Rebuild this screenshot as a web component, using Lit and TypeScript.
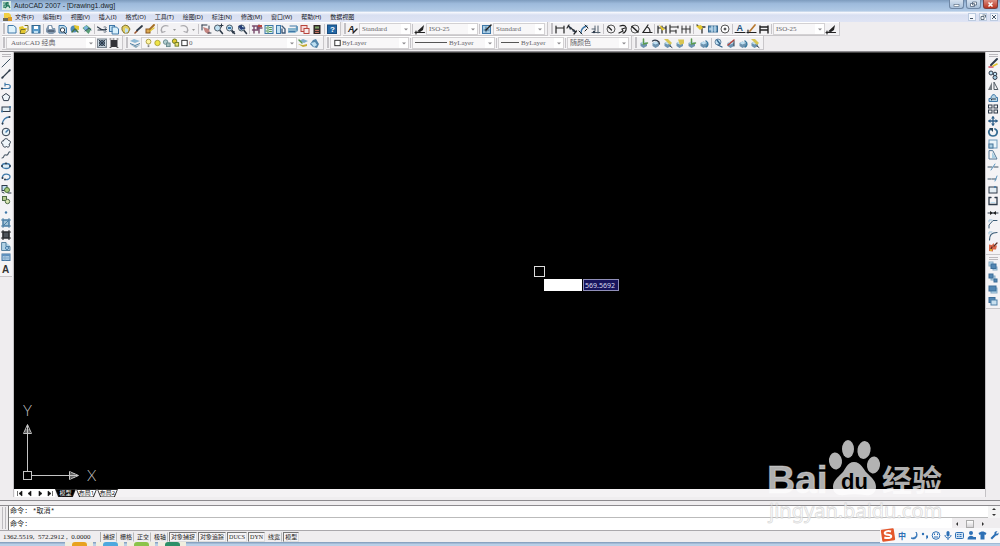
import { LitElement, html, svg, css, nothing } from "lit";
import { customElement, property } from "lit/decorators.js";

const K = "#2f3b4a";
const B = "#3f78a8";
const L = "#bfe0f2";
const G = "#5b9a4f";
const Y = "#e3c62f";
const R = "#b8443c";

const line = (d: string, c = K, w = 1) =>
  svg`<path d=${d} fill="none" stroke=${c} stroke-width=${w} stroke-linecap="round"/>`;
const fill = (d: string, c = K) => svg`<path d=${d} fill=${c}/>`;
const box = (x: number, y: number, w: number, h: number, f: string, s = K) =>
  svg`<rect x=${x} y=${y} width=${w} height=${h} fill=${f} stroke=${s}/>`;
const dot = (x: number, y: number, r: number, f: string, s = "none") =>
  svg`<circle cx=${x} cy=${y} r=${r} fill=${f} stroke=${s}/>`;
const sheet = svg`<path d="M2 2.5h5l2.500 2v5.500h-7.500z" fill=${L} stroke=${B}/>`;
const cube = svg`${fill("M2.500 6l3-1.500 3.500 1.500v3l-3.500 2-3-2z", "#6d93b0")}${fill("M2.500 6l3-1.500 3.500 1.500-3.500 1.500z", L)}`;
const lens = svg`${line("M8 7.500l2.500 3", K, 1.6)}${dot(5.5, 5, 3, L, "#4d5b68")}`;

const icons: Record<string, unknown> = {
  new: svg`<path d="M2 2.500h5.500l2.500 2v5.500h-8z" fill="#dff2fb" stroke=${B}/>`,
  open: svg`${fill("M1 4l4-1 1 2h3l-2 5h-5z", Y)}${line("M7 2.500h3v5l-3 3h-5l1-4h4", "#77712e")}`,
  save: svg`${box(2, 2.5, 8, 7.500, "#5b9cca", "#35678e")}${fill("M4 3h4v3h-4z", "#fff")}${fill("M4 8h4v2h-4z", L)}`,
  print: svg`${fill("M3 2h4l1 3h2l1 4-3 2h-4l-3-2v-3z", "#8298af")}${fill("M4 3h2l1 3h-3z", "#fff")}${line("M3 8h6")}`,
  preview: svg`${sheet}${dot(5.5, 7, 2.2, "#fff", K)}${line("M7 9l2 2")}`,
  publish: svg`${dot(5, 6, 3.5, "#4d8abb")}${fill("M5 2l5 1v4l-4-1z", Y)}${line("M3 9l3-3 3 3", "#47753b", 1.3)}`,
  dwf: svg`${fill("M1.500 5l4-3 5 4-3 5z", "#5a9c76")}${dot(5, 5, 2, "#7ab6e0")}${line("M4 8l4-3 2 2", "#35566f")}`,
  cut: svg`${line("M1.500 4l4 2.500h5M2 7h6", K, 1.2)}${line("M8 4c3-1 3 2 0 2.500M8 7c3 0 3 3 0 2", "#536272")}`,
  copy: svg`${box(1.5, 2.500, 5, 6, L, B)}${fill("M4.500 4h4l2 2v5h-6z", "#d8f0fb")}${line("M4.500 4h4l2 2v5h-6z", B)}`,
  paste: svg`<path d="M2 4l3-2 3 1 2 3-2 4h-4l-2-3z" fill="#e3cf62" stroke="#83752d"/>${fill("M5 5l3 1v3l-3 1z", L)}`,
  brush: svg`${line("M3 10l2-2", "#9a5128", 1.6)}${line("M5 7.500l5-4.500", K, 1.8)}`,
  match: svg`${box(2, 6, 4, 4, "#dca852", "#8b5823")}${line("M6 6l4-4", "#a56f26", 2)}${line("M6 8l4-3", Y, 1.3)}`,
  undo: line("M3 9c-2-5 2-7 6-6M2 7l1 2.500 3-1", "#aaa9ad", 1.2),
  redo: line("M9 9c2-5-2-7-6-6M10 7l-1 2.500-3-1", "#aaa9ad", 1.2),
  pan: svg`${line("M2 2v5M2 2h5", K)}${fill("M3 4l3 1 3 1 1 4-2 1-3-2z", "#c38581")}${line("M9 3v3M8 10h3")}`,
  zoomRt: svg`${lens}${line("M8 2.500h3M9.500 1v3")}`,
  zoomWin: svg`${lens}${fill("M7 8h4l-2 3z")}${fill("M4 4h3v2h-3z", B)}`,
  zoomPrev: svg`${lens}${fill("M2 3l4-1v2l4 1-5 2z", "#263d76")}`,
  props: svg`${line("M3 3v7M1.500 3h5v4h-5M8 2v8M6 5h5", "#774a6b", 1.4)}${fill("M7 2h4v2h-4z", R)}`,
  design: svg`${box(2, 2.5, 8, 8, "#dcebf3", B)}${line("M5 3v7M6.500 4.500h2M6.500 6.500h2M6.500 8.500h2M3 5h1M3 8h1", G)}`,
  palettes: svg`${box(1.5, 2.500, 4, 8, L, B)}${line("M7 3l3 3v4h-3M7 6v4", "#425c79", 1.4)}`,
  sheets: svg`${fill("M1 5h7l3-2v5l-3 2h-7z", "#8ab6ce")}${line("M3 3h7v4M2 8.500h6", B)}`,
  markup: svg`${box(2, 2.5, 6, 6, "#f5d9d9", R)}${box(5, 5.5, 5, 5, "#f7eaea", R)}`,
  calc: svg`${box(3, 2.5, 6, 8, "#3c3532", "#2e2525")}${fill("M4 3.500h4v2h-4z", "#7da365")}${line("M4.500 7.500h3M4.500 9.500h3", "#c87566")}`,
  help: svg`${box(1.5, 2, 9, 8.500, "#2167a5", "#174c80")}<text x="4" y="9" font-size="8" font-weight="700" font-family="Liberation Sans" fill="#fff">?</text>`,
  textStyle: svg`<text x="1" y="8.500" font-size="9" font-style="italic" font-weight="700" font-family="Liberation Sans" fill="#222">A</text>${line("M6 10l4-4", "#222", 1.4)}`,
  dimStyle: svg`${line("M1 9.500h9.500M2 8v3", "#222", 1.2)}${fill("M3 8.500l7-6.500-1 5-3 2z", "#222")}`,
  tableStyle: svg`${box(1.5, 2.500, 8, 8, "#a8cce4", B)}${line("M3 7h5M5 4v5", "#36698f")}${line("M5 7l5-5", "#222", 1.5)}`,
  dLinear: line("M2 3v7M10 3v7M2 5h8M2 4v2M10 4v2", "#222", 1.2),
  dAligned: svg`${line("M2 3l8 6M1 5l2-3M8 11l2.500-3", "#222", 1.2)}${fill("M2 2l4 3-2 2zM10 10l-4-2 2-2z")}`,
  dArc: svg`${line("M3 10c0-4 2-6 6-7", B, 1.4)}${line("M1 8l3 3M7 2l3 3M7 8l2-2", "#222")}`,
  dOrd: svg`${line("M2 9.500h8M8 3v7M2 6h3M5 3v5", "#52606e")}${dot(4, 9, 1.2, K)}`,
  dRadius: svg`${dot(6, 6, 4, "none", "#555")}${line("M3.500 4l3 3", "#222", 1.3)}`,
  dJog: svg`${line("M3 3c5-2 7 1 6 4s-3 3-3 3M2 10l4-2-1-2 3-1", "#222", 1.2)}`,
  dDia: svg`${dot(6, 6, 4, "none", "#555")}${line("M3 3.500l6 5.500", "#222", 1.6)}`,
  dAng: line("M7 2l-5 7.500h9M6 4c3 1 3 3 3 5", "#222", 1.2),
  dQuick: svg`${line("M2 3v7M6 3v7M10 3v7M2 5h8", "#222", 1.2)}${fill("M3 1.500l6 5-3 1z", Y)}`,
  dBase: line("M2 2v8M2 4h8M2 8h6M10 3v2M8 7v3", "#333", 1.2),
  dCont: line("M2 3v7M6 3v7M10 3v7M2 6h8", "#333"),
  leader: svg`${line("M5 4h5M7 5v5M2 2l3 3", "#333", 1.3)}${fill("M1 3l5-1 2 3-3 2z", Y)}`,
  tol: svg`${box(1.5, 3, 9, 6, "#6f9fc1", "#35678e")}${line("M5 3v6M8 3v6M2.500 6h1.500", "#e3f4ff")}`,
  center: svg`${dot(6, 6, 4, "#fff", "#555")}${line("M6 5v2M5 6h2", "#222")}`,
  dEdit: svg`<text x="2.500" y="8" font-size="9" font-weight="700" font-family="Liberation Sans" fill="#24557e">A</text>${line("M1 9.500h10", "#222")}`,
  dTextEdit: svg`${line("M1 9.500h9M2 7v3", "#222", 1.2)}${line("M4 8l5-6", "#b7782f", 1.7)}`,
  dUpdate: svg`${line("M2 3v7M10 3v7M2 4h8M2 7h8", "#222", 1.4)}`,
  gear: svg`${box(1.5, 2, 9, 8.500, "#c8d5df", "#7d8791")}${dot(6, 6, 2.5, "#5d7890", K)}${line("M3 3l6 6M9 3l-6 6")}`,
  wsSave: svg`${box(3, 3.500, 6, 6, "#333338", "#35353a")}${line("M2 2h1M5 2h1M9 2h1M2 10.500h1M9 10.500h1", "#555")}`,
  layers: svg`${fill("M1 4l4-2 6 2-5 2z", "#8db8d4")}${fill("M1 6l5 2 5-2v1l-5 2-5-2z", "#477a9f")}${fill("M2 8l5 1 4-1-4 3z", "#8aa8ba")}`,
  layPrev: svg`${fill("M2 4l4-2 5 2-4 2z", "#7cabc9")}${fill("M1 7l5 1 4-1v2l-4 1z", "#c4ad36")}${line("M2 3l3 3", G, 1.4)}`,
  layState: svg`${fill("M4 3l3-1 3 5-2 4-4-1-3-3z", "#5284a9")}${fill("M2 6l4-1 2 3-3 2z", L)}`,
  bulb: svg`${dot(5, 4.5, 2.700, "#fff4a0", "#a8993a")}${line("M4.500 8.500h1M4.500 10h1", "#666")}`,
  sun: dot(5, 6, 3, "#f0e445", "#a9a23b"),
  vpf: svg`${dot(4, 5, 2.500, "#b2cdd0", "#66888c")}${box(5, 6, 4, 4, "#a7c0bf", "#66888c")}`,
  lock: svg`${dot(4, 4, 2.500, Y, "#667a20")}${box(4.5, 5.500, 4, 4, "#e9e06c", "#6d7826")}`,
  swatch: box(2, 3, 6, 6, "#fff", "#222"),
  c1: svg`${cube}${line("M5.500 2v5l4-1", G, 1.5)}`,
  c2: svg`${cube}${line("M2.500 4c3-2 7 0 7 3", K, 1.3)}`,
  c3: svg`${cube}${fill("M2 2h4l4 4-2 2z", "#d8c552")}${line("M8 9l2 1.500")}`,
  c4: svg`${cube}${fill("M4 2.500h6v4l-4 1.500z", "#d8c552")}`,
  c5: svg`${cube}${line("M8 4c3 2 2 5 0 6", "#3979a0", 1.5)}`,
  c6: svg`${dot(5, 5, 3, L, "#6c8ba8")}${line("M5 8l4 2M4 3l3 4", "#34658d", 1.3)}`,
  c7: svg`${cube}${line("M3 8l6-5", R, 1.5)}${line("M9 4v5", K)}`,
  line: line("M2 10l8-8", "#3e5364"),
  xline: svg`${line("M2 10l8-8", K, 1.2)}${dot(2.5, 9.5, 1, K)}${dot(9.5, 2.5, 1, K)}`,
  pline: svg`${line("M2 8.500h6c3 0 3-4 0-4h-3M5 3v3", B, 1.2)}${dot(2, 8.5, 1, K)}`,
  polygon: svg`<path d="M6 2.500l3.800 2.800-1.500 4.300h-4.600l-1.500-4.300z" fill="#eef5fa" stroke=${K}/>`,
  rect: svg`${box(2, 4, 8, 4.500, "#e3eff6", K)}${dot(10, 4, 1, B)}${dot(2, 8.500, 1, B)}`,
  arc: svg`${line("M2.500 10c0-4 3-7 7-7", B, 1.3)}${dot(2.500, 9.500, 1, K)}${dot(9.500, 3, 1, K)}`,
  circle: svg`${dot(6, 6, 3.800, "#e8f3f9", K)}${line("M6 6l2-2", B, 1.4)}`,
  cloud: svg`<path d="M3 7.500c-2-.5-2-4 .5-3.500 .5-3 4-3 5-.5 2.500 0 2.500 3 .5 3.500 1.500 2.500-1 4-2.500 2.500-2 1.500-4 0-3.500-2z" fill="#eef5fa" stroke=${K}/>`,
  spline: line("M2 9c3 0 1-4 4-3 3 1 2-4 4-3", "#4d5c6a", 1.1),
  ellipse: svg`<ellipse cx="6" cy="6" rx="4" ry="2.500" fill="#dcecf6" stroke=${B} stroke-width="1.300"/>${dot(6, 3.500, 1, K)}${dot(2, 6, 1, K)}${dot(10, 6, 1, K)}`,
  earc: svg`${line("M2.500 7c-1-5 8-5 7.500-1 0 2-3 3-4 2.500", B, 1.3)}${dot(5, 8.500, 1, K)}${dot(2.500, 7, 1, K)}`,
  insert: svg`${box(2, 2.500, 5, 5, L, K)}${dot(7, 7, 2.500, "#a9ca79", "#4b713c")}${line("M8 10h3M2 9l2 1", K)}`,
  block: svg`${box(2.500, 2.500, 4, 4, "#b7cb8e", "#4d6a45")}${dot(7.500, 7.500, 2.200, "#dce8b3", "#4d6a45")}`,
  point: dot(6, 6.500, 1.200, B),
  hatch: svg`${box(3, 3, 6, 6, "#a2c2d6", B)}${line("M1.500 3h9M1.500 9h9M3 1.500v9M9 1.500v9M4 8l4-4", "#4d7fa3")}`,
  grad: svg`${box(3, 3, 6, 6, "#4e545b", "#2a2d31")}${line("M1.500 3h9M1.500 9h9M3 1.500v9M9 1.500v9", "#2a2d31", 1.2)}`,
  region: svg`${fill("M2 2.500h4l4 3v5h-8z", "#b2d2e5")}${line("M2 2.500h4v4h4v4h-8z", "#57819f")}${dot(7, 8, 1.500, L, B)}`,
  table: svg`${box(2, 3, 8, 6.500, "#a5c6e2", "#4574a0")}${fill("M2 3h8v2h-8z", "#5f90bd")}${line("M2 7h8M5 5v4", "#84abcb")}`,
  mtext: svg`<text x="2" y="10" font-size="10" font-weight="700" font-family="Liberation Sans" fill="#333">A</text>`,
  erase: svg`${line("M2 10h4", "#d24f58", 1.5)}${line("M4 8l6-6", K, 2)}${line("M6 9l4-2", Y, 1.6)}`,
  copy2: svg`${dot(4, 4, 2, L, K)}${dot(8, 5, 1.800, L, K)}${dot(8, 8.500, 2, "#a9cee3", K)}`,
  mirror: svg`${fill("M5 2v8h-4z", "#777d83")}${line("M7 2.500v7h3.500z", "#4f5962")}`,
  offset: svg`<path d="M2 9.500v-3h2c0-5 5-5 5-1h1.500v4z" fill="#b6d4e5" stroke=${B}/>${line("M4.500 8v-1h4", K)}`,
  array: svg`${box(1.500, 2, 3.500, 3, "#eee")}${box(7, 2, 3.500, 3, "#eee")}${box(1.500, 7, 3.500, 3, "#eee")}${box(7, 7, 3.500, 3, "#eee")}`,
  move: svg`${line("M2 6h8M6 2v8", "#2d5f89", 1.3)}${fill("M6 1l2 2.500h-4zM6 11l2-2.500h-4zM1 6l2.500-2v4zM11 6l-2.500-2v4z", "#2d5f89")}`,
  rotate: svg`${line("M4 3c-4 2-2 7 2 7s6-5 2-7", "#356c93", 1.7)}${fill("M2 2h4v4z", "#28445a")}`,
  scale: svg`${box(2, 2, 8, 8, "#eaf4fa", "#6d9abb")}${box(2, 6, 4, 4, "#a8cde2", "#447398")}`,
  stretch: svg`${line("M2 2v8h8l-4-8z", "#537797")}${fill("M5 3l4 6h-4z", "#a9cfe4")}`,
  trim: svg`${line("M1 6h4M7 6h4", "#3b5266")}${line("M4 9l4-6", "#5993bd")}`,
  extend: svg`${line("M1 7h3M5 7h4", "#3b5266")}${line("M8 9l2-5", "#5993bd")}`,
  break1: svg`${box(2, 3, 8, 6, "#e4edf3")}${dot(8, 3, 1, B)}`,
  break2: svg`${line("M4 2.500h-2v7h8v-7h-2", K, 1.3)}${line("M4 7.500h4", L)}`,
  join: svg`${line("M1 6h10", K)}${fill("M6 6l-3-2v4zM6 6l3-2v4z", "#222")}`,
  chamfer: svg`${line("M2 10v-3l4-4.500h4", "#3a5c76")}${line("M2 4v-2h3", "#9ac1d8")}`,
  fillet: svg`${line("M2.500 10c0-5 2-7.500 7.500-7.500", "#3a5c76", 1.2)}${line("M2 4v-2h3", "#9ac1d8")}`,
  explode: svg`${fill("M2 3.500l3 .5 1.500-2 1 2.500 2.500 0-1 4-3 0v2l-4-.5z", "#d9684a")}${line("M7 5l3-3M4 8l1-2", "#5a2d22", 1.3)}${dot(4, 9, 1, Y)}`,
  front: svg`${box(2, 2, 4, 4, L, "#86aac4")}${box(6, 7, 4, 3, L, "#86aac4")}${box(4, 4, 5, 4.500, "#5286b3", "#3c6e99")}`,
  back: svg`${box(4, 4, 4, 4, "#b7d1e2", "#86aac4")}${box(2, 2, 4, 4, "#5286b3", "#3c6e99")}${box(7, 7, 3, 3, "#5286b3", "#3c6e99")}`,
  above: svg`${box(4, 5, 6, 5, L, "#86aac4")}${box(2, 3, 7, 5, "#5286b3", "#3c6e99")}`,
  under: svg`${box(2, 2.500, 6, 5, "#5286b3", "#3c6e99")}${box(4, 5, 6, 5, "#c8e0ef", "#4e80a8")}`,
};

const base = css`
  * { box-sizing: border-box; }
  button { border: 0; padding: 0; margin: 0; background: none; font: inherit; color: inherit; flex: none; }
  svg { display: block; }
`;

@customElement("tool-icon")
class ToolIcon extends LitElement {
  @property() name = "";
  static styles = [base, css`
    :host { display: block; flex: none; width: 12px; height: 12px; }
    .tool { display: block; width: 12px; height: 12px; }
  `];
  render() {
    return html`<button class="tool" aria-label=${this.name}>
      <svg width="12" height="12" viewBox="0 0 12 12">${icons[this.name]}</svg>
    </button>`;
  }
}

@customElement("combo-box")
class ComboBox extends LitElement {
  @property() label = "";
  @property() value = "";
  @property({ type: Array }) lead: string[] = [];
  @property({ type: Number }) rule = 0;
  static styles = [base, css`
    :host { display: flex; flex: none; height: 12px; border: 1px solid #d3d1d3; background: #f8f7f8; align-items: center; padding-left: 2px; }
    .lead { flex: none; width: 9px; height: 12px; margin-top: 1px; }
    .rule { flex: none; height: 1px; background: #555; margin-right: 2px; }
    .pick { appearance: none; flex: 1; min-width: 0; height: 10px; border: 0; padding: 0; background: none; color: #66646a;
      font: 7px/10px "Liberation Serif", "Noto Sans CJK SC", serif; }
    .arrow { flex: none; width: 9px; height: 10px; background: #fff; }
  `];
  render() {
    return html`
      ${this.lead.map((n) => html`<svg class="lead" viewBox="0 0 10 12">${icons[n]}</svg>`)}
      ${this.rule ? html`<span class="rule" style="width:${this.rule}px"></span>` : nothing}
      <select class="pick" aria-label=${this.label}><option>${this.value}</option></select>
      <svg class="arrow" viewBox="0 0 9 10"><path d="M3 4.500h4l-2 2z" fill="#8b898c"/></svg>`;
  }
}

type Item = string | { label: string; value: string; w: string; lead?: string[]; rule?: number };
const combo = (label: string, value: string, w: string, lead: string[] = [], rule = 0): Item => ({ label, value, w, lead, rule });

const rowOne: Item[][] = [
  ["new", "open", "save", "|", "print", "preview", "publish", "dwf", "|", "cut", "copy", "paste", "brush", "match", "|",
    "undo", "v", "redo", "v", "|", "pan", "zoomRt", "zoomWin", "zoomPrev", "|", "props", "design", "palettes", "sheets", "markup", "calc", "|", "help"],
  ["textStyle", combo("文字样式", "Standard", "style"), "|", "dimStyle", combo("标注样式", "ISO-25", "style"), "|",
    "tableStyle", combo("表格样式", "Standard", "style")],
  ["dLinear", "dAligned", "dArc", "dOrd", "|", "dRadius", "dJog", "dDia", "dAng", "|", "dQuick", "dBase", "dCont", "|",
    "leader", "tol", "center", "|", "dEdit", "dTextEdit", "dUpdate", "|", combo("标注样式控制", "ISO-25", "style"), "dimStyle"],
];
const rowTwo: Item[][] = [
  [combo("工作空间", "AutoCAD 经典", "space"), "gear", "wsSave"],
  ["layers", combo("图层", "0", "layer", ["bulb", "sun", "vpf", "lock", "swatch"]), "layPrev", "layState"],
  [combo("颜色", "ByLayer", "color", ["swatch"]), "|", combo("线型", "ByLayer", "ltype", [], 32), "|",
    combo("线宽", "ByLayer", "lweight", [], 18), "|", combo("打印样式", "随颜色", "plot")],
  ["c1", "c2", "c3", "c4", "c1", "c5", "|", "c6", "c7", "c5", "c3"],
];

const menus = ["文件(F)", "编辑(E)", "视图(V)", "插入(I)", "格式(O)", "工具(T)", "绘图(D)", "标注(N)", "修改(M)", "窗口(W)", "帮助(H)", "数据视图"];
const draw = ["line", "xline", "pline", "polygon", "rect", "arc", "circle", "cloud", "spline", "ellipse", "earc", "insert", "block", "point", "hatch", "grad", "region", "table", "mtext"];
const modify = ["erase", "copy2", "mirror", "offset", "array", "move", "rotate", "scale", "stretch", "trim", "extend", "break1", "break2", "join", "chamfer", "fillet", "explode"];
const order = ["front", "back", "above", "under"];
const modes: [string, boolean][] = [["捕捉", false], ["栅格", false], ["正交", false], ["极轴", false], ["对象捕捉", true], ["对象追踪", true], ["DUCS", true], ["DYN", true], ["线宽", false], ["模型", true]];

@customElement("app-root")
class AppRoot extends LitElement {
  static styles = [base, css`
    :host { display: flex; flex-direction: column; position: relative; height: 100vh; overflow: hidden; background: #efedef;
      color: #222; font: 7px/10px "Noto Sans", "Noto Sans CJK SC", sans-serif; }
    .title { display: flex; flex: none; height: 12px; align-items: flex-start; padding: 0 2px; gap: 3px;
      background: linear-gradient(#7d9bbd, #9dbadb 30%, #b0c9e5 90%, #dce6f3); }
    .title h1 { flex: 1; margin: 0; font: 7px/11px "Liberation Sans", sans-serif; color: #151c26; }
    .win { width: 15px; height: 9px; border: 1px solid #6f87a5; border-top: 0; border-radius: 0 0 3px 3px; background: linear-gradient(#d5e1ef, #a8bfd9); }
    .wins { display: flex; gap: 2px; }
    .close { background: linear-gradient(#dc8c80, #b93522); border-color: #7d3b3c; }
    .win svg, .mdi svg { margin: 0 auto; }
    .menu { display: flex; flex: none; height: 10px; align-items: center; padding: 0 2px 0 3px; background: linear-gradient(#fafbff, #d8dff1 30%, #dfe4f4); }
    .menu nav { display: flex; flex: 1; gap: 9px; padding-left: 3px; }
    .menu a { color: #15151c; text-decoration: none; font: 6px/10px "Noto Sans", "Noto Sans CJK SC", sans-serif; white-space: nowrap; }
    .mdis { display: flex; gap: 3px; }
    .mdi { width: 8px; height: 8px; background: #f4f7fc; border: 1px solid #bccbe0; }
    .bars { flex: none; display: flex; flex-direction: column; border-bottom: 1px solid #8b898d; padding: 0 0 1px 2px; }
    .row { display: flex; gap: 2px; height: 14px; }
    .bar { display: flex; flex: none; align-items: center; padding-right: 2px; border: solid #c9c7ca; border-width: 0 1px 1px 0; background: #f3f2f4; box-shadow: inset 0 1px #fff; }
    .grip { flex: none; width: 2px; height: 11px; margin: 0 1px; border: solid #c3c1c5; border-width: 0 1px; }
    .sep { flex: none; width: 1px; height: 10px; margin: 0 1px; background: #c6c4c8; }
    .drop { width: 7px; height: 10px; }
    .style { width: 52px; }
    .space { width: 90px; padding-left: 4px; }
    .layer { width: 156px; }
    .color { width: 79px; }
    .ltype { width: 83px; }
    .lweight { width: 66px; }
    .plot { width: 62px; }
    .work { display: flex; flex: 1; min-height: 0; }
    .side { flex: none; width: 14px; border: solid #c4c2c5; border-width: 0 1px 0 0; padding-right: 1px; }
    .right { border-width: 0 0 0 1px; width: 15px; padding: 0; }
    .rack { display: flex; flex-direction: column; align-items: center; padding-bottom: 2px; border-bottom: 1px solid #c9c7ca; background: #f4f3f5; }
    .hgrip { flex: none; width: 9px; height: 3px; margin: 2px 0 0; border: solid #bab8bc; border-width: 1px 0; }
    .tools { display: flex; flex-direction: column; justify-content: space-between; }
    .tools tool-icon { height: 11px; }
    .draw { height: 217px; }
    .modify { height: 195px; }
    .order { height: 46px; }
    .main { flex: 1; min-width: 0; display: flex; flex-direction: column; }
    .canvas { flex: 1; position: relative; background: #000; border-top: 1px solid #444; }
    .ucs { position: absolute; left: 5px; bottom: 0; }
    .cursor { position: absolute; left: 520px; top: 213px; width: 11px; height: 11px; border: 1px solid #ddd; }
    .coord { position: absolute; top: 226px; height: 12px; padding: 0 1px; border: 1px solid #fff; background: #fff; font: 7px/10px "Noto Sans", sans-serif; }
    .cx { left: 530px; width: 38px; color: #fff; }
    .cy { left: 569px; width: 36px; background: #17145c; border-color: #8f8eb8; color: #d8d8ee; }
    .tabs { display: flex; flex: none; height: 8px; background: #f4f2f4; font: 6px/8px "Noto Sans", "Noto Sans CJK SC", sans-serif; padding-left: 1px; }
    .tabs .go { width: 10px; height: 8px; background: #fff; }
    .tab { width: 21px; height: 8px; line-height: 8px; background: #222; clip-path: polygon(0 0, 100% 0, 85% 100%, 15% 100%); padding: 0; }
    .tab span { display: block; height: 7px; line-height: 7px; margin: 0 1px; background: #fff; color: #111; clip-path: polygon(0 0, 100% 0, 84% 100%, 16% 100%); }
    .tab.on span { background: #000; color: #fff; }
    .split { flex: none; height: 8px; padding-top: 3px; }
    .split::before { content: ""; display: block; height: 1px; background: #8d8b8f; }
    .cmd { flex: none; display: grid; grid-template-columns: 8px 1fr; height: 25px; border-top: 1px solid #8d8b8f; }
    .cmdgrip { margin: 1px 2px; border: solid #bdbbbf; border-width: 0 1px; }
    .console { display: grid; grid-template: 12px 12px / 1fr 12px; border-left: 1px solid #777; background: #fff; font: 7px/11px "Liberation Mono", "Noto Sans CJK SC", monospace; }
    .hist { border-bottom: 1px solid #bbb; padding-left: 1px; }
    .ask { display: flex; padding-left: 1px; line-height: 12px; }
    .entry { flex: 1; min-width: 0; border: 0; padding: 0; height: 12px; font: inherit; background: none; }
    .hscroll { flex: none; display: flex; width: 36px; background: #efedef; align-items: center; justify-content: space-around; }
    .thumb { width: 8px; height: 8px; border: 1px solid #aaa; background: linear-gradient(#fff, #d5d3d6); }
    .vscroll { display: flex; background: #f4f4f4; justify-content: center; align-items: center; }
    .corner { background: #efedef; }
    .status { flex: none; display: flex; align-items: center; height: 12px; border-top: 1px solid #aaa8ac; }
    .pos { width: 101px; height: 10px; padding-left: 3px; font: 7px/10px "Liberation Serif", serif; border-right: 1px solid #aaa; white-space: pre; }
    .mode { height: 10px; padding: 0 1px; border: 1px solid transparent; border-right-color: #bbb; font: 6px/9px "Liberation Serif", "Noto Sans CJK SC", serif; margin-right: 1px; }
    .on.mode { border-color: #777 #ddd #ddd #777; background: #f5f4f6; }
    .task { flex: none; height: 4px; display: flex; background: linear-gradient(#7c97b7, #b9cfe7 60%); padding-left: 65px; gap: 3px; }
    .slot { width: 28px; background: #f0eedf; display: flex; justify-content: center; }
    .slot i { width: 15px; height: 4px; border-radius: 3px 3px 0 0; background: var(--tint); }
    .ime { position: absolute; right: 0; bottom: 3px; width: 120px; height: 15px; background: #f8f8fa; }
    .mark { position: absolute; left: 766px; top: 436px; pointer-events: none; }
  `];

  private bar(items: Item[]) {
    return html`<div class="bar"><span class="grip"></span>${items.map((i) =>
      typeof i !== "string"
        ? html`<combo-box class=${i.w} .label=${i.label} .value=${i.value} .lead=${i.lead ?? []} .rule=${i.rule ?? 0}></combo-box>`
        : i === "|" ? html`<span class="sep"></span>`
        : i === "v" ? html`<button class="drop" aria-label="more"><svg width="7" height="10"><path d="M2 5h3l-1.500 2z" fill="#999"/></svg></button>`
        : html`<tool-icon name=${i}></tool-icon>`)}</div>`;
  }
  private rack(groups: [string, string[]][]) {
    return groups.map(([c, names]) => html`<div class="rack"><span class="hgrip"></span>
      <div class="tools ${c}">${names.map((n) => html`<tool-icon name=${n}></tool-icon>`)}</div></div>`);
  }

  render() {
    return html`
      <header class="title">
        <svg width="9" height="10" viewBox="0 0 9 10"><rect width="9" height="9" y="1" fill="#d8ebe3"/><path d="M1 3h3v2h-2v3M6 2v4h2M3 8l3-3 2 3M5 2l-1 5" fill="none" stroke="#24795f" stroke-width="1.200"/></svg>
        <h1>AutoCAD 2007 - [Drawing1.dwg]</h1>
        <div class="wins">
          <button class="win" aria-label="最小化"><svg width="9" height="8"><rect x="2" y="4.500" width="5" height="2" fill="#fff" stroke="#53657b" stroke-width=".6"/></svg></button>
          <button class="win" aria-label="还原"><svg width="9" height="8"><path d="M3.500 2h4v3h-4zM1.500 3.500h4v3h-4z" fill="#fff" stroke="#53657b" stroke-width=".8"/></svg></button>
          <button class="win close" aria-label="关闭"><svg width="9" height="8"><path d="M2.500 2.500l4 4M6.500 2.500l-4 4" stroke="#fff" stroke-width="1.500"/></svg></button>
        </div>
      </header>
      <div class="menu">
        <svg width="9" height="9" viewBox="0 0 9 9"><path d="M1 0h5l2 2v6h-7z" fill="#f1cf45"/><path d="M0 5h5v3h-5z" fill="#6e6a57"/><path d="M5 4h4v4h-4z" fill="#dc9b25"/></svg>
        <nav>${menus.map((m) => html`<a href="#">${m}</a>`)}</nav>
        <div class="mdis">
          <button class="mdi" aria-label="最小化窗口"><svg width="6" height="6"><path d="M1 4.500h3" stroke="#456"/></svg></button>
          <button class="mdi" aria-label="还原窗口"><svg width="6" height="6"><path d="M2.500 1h3v2.500M1 2.500h3v3h-3z" fill="none" stroke="#456" stroke-width=".8"/></svg></button>
          <button class="mdi" aria-label="关闭窗口"><svg width="6" height="6"><path d="M1 1l4 4M5 1l-4 4" stroke="#456"/></svg></button>
        </div>
      </div>
      <div class="bars">
        <div class="row">${rowOne.map((b) => this.bar(b))}</div>
        <div class="row">${rowTwo.map((b) => this.bar(b))}</div>
      </div>
      <div class="work">
        <aside class="side">${this.rack([["draw", draw]])}</aside>
        <main class="main">
          <div class="canvas">
            <svg class="ucs" width="80" height="90" viewBox="0 -6 80 90" fill="none" stroke="#c4c4c4">
              <rect x="4.500" y="66.500" width="8" height="8"/>
              <path d="M8.500 66V20M4.500 28.500l4-9 4 9zM7 28v-4M10 28v-4M13 70.500h46M50.500 66.500l9 4-9 4zM51 69h5M51 72h5"/>
              <g fill="#c4c4c4" stroke="none" font-family="Lato" font-weight="300" font-size="15">
                <text x="4" y="11">Y</text><text x="68" y="76">X</text>
              </g>
            </svg>
            <span class="cursor"></span>
            <input class="coord cx" aria-label="X" value="">
            <input class="coord cy" aria-label="Y" value="569.5692">
          </div>
          <div class="tabs">
            ${["M2.500 2v5M7 2v5l-3-2.500z", "M6 2v5l-3-2.500z", "M4 2v5l3-2.500z", "M7.500 2v5M3 2v5l3-2.500z"].map((d) =>
              html`<button class="go" aria-label="滚动"><svg width="10" height="8"><path d=${d} fill="#111" stroke="#111" stroke-width=".6"/></svg></button>`)}
            <button class="tab on"><span>模型</span></button><button class="tab"><span>布局1</span></button><button class="tab"><span>布局2</span></button>
          </div>
        </main>
        <aside class="side right">${this.rack([["modify", modify], ["order", order]])}</aside>
      </div>
      <div class="split"></div>
      <section class="cmd">
        <span class="cmdgrip"></span>
        <div class="console">
          <div class="hist">命令: *取消*</div>
          <div class="vscroll"><svg width="8" height="10"><path d="M2 3h4l-2-2zM2 7h4l-2 2z" fill="#333"/></svg></div>
          <div class="ask"><label for="entry">命令:</label><input id="entry" class="entry">
            <div class="hscroll"><svg width="4" height="6"><path d="M3 1v4l-2-2z" fill="#333"/></svg><span class="thumb"></span><svg width="4" height="6"><path d="M1 1v4l2-2z" fill="#333"/></svg></div>
          </div>
          <div class="corner"></div>
        </div>
      </section>
      <footer class="status">
        <span class="pos">1362.5519,  572.2912 ,  0.0000</span>
        ${modes.map(([m, on]) => html`<button class="mode ${on ? "on" : ""}">${m}</button>`)}
      </footer>
      <div class="task">${["#e8a21f", "#4ea8de", "#8bc34a", "#2c8f68"].map((c) => html`<span class="slot"><i style="--tint:${c}"></i></span>`)}</div>

      <svg class="mark" width="184" height="94" viewBox="766 436 184 94" fill="#fff" fill-opacity=".7">
        <text x="767" y="493" font-family="Liberation Sans" font-weight="700" font-size="39" stroke="#fff" stroke-opacity=".4">Bai</text>
        <ellipse cx="835.500" cy="461" rx="6.500" ry="8.500" transform="rotate(-8 835.500 461)"/>
        <ellipse cx="848" cy="449" rx="6" ry="9"/>
        <ellipse cx="864" cy="450" rx="6.500" ry="9" transform="rotate(10 864 450)"/>
        <ellipse cx="873.500" cy="465" rx="6.500" ry="8.500" transform="rotate(8 873.500 465)"/>
        <path d="M854 462c7 0 9 7 13 11 5 5 9 8 9 14 0 7-6 9-11 8-7-1-14-1-21 0-6 1-11-2-11-8s4-9 9-14c4-4 5-11 12-11z"/>
        <text x="841" y="489" font-family="Liberation Sans" font-weight="700" font-size="22" fill="#000" fill-opacity="1">du</text>
        <text x="882" y="491" font-family="Noto Sans CJK SC" font-weight="700" font-size="30">经验</text>
        <text x="769" y="518" font-family="Noto Sans" font-size="20" stroke="#ccc" stroke-opacity=".7" stroke-width=".8">jingyan.baidu.com</text>
      </svg>

      <svg class="ime" width="120" height="15" viewBox="0 0 120 15" fill="#2c6fb5">
        <g transform="rotate(-8 8 7)"><rect x="1.500" y="1" width="13" height="12" rx="1" fill="#e4572b"/><path d="M11.500 4c-3-1.500-6.500-1-6.500 1s6 1.500 6 3.500-4 2-7 .5" fill="none" stroke="#fff" stroke-width="2"/></g>
        <text x="18" y="11" font-family="Noto Sans CJK SC" font-weight="700" font-size="8">中</text>
        <path d="M36 4c2 4-1 6-5 6 4 3 8-2 5-6z" stroke="#2c6fb5" stroke-width=".8"/>
        <circle cx="43" cy="6" r="1.200"/><path d="M46 7.500h2v2l-1.500 2z"/>
        <circle cx="56" cy="7.500" r="3.800" fill="none" stroke="#2c6fb5"/><path d="M54.500 5.500v1.500M57.500 5.500v1.500M54 9h4" stroke="#2c6fb5" fill="none"/>
        <rect x="66.500" y="3" width="3" height="5.500" rx="1.500"/><path d="M65 7c0 4 6 4 6 0M68 10v2" fill="none" stroke="#2c6fb5"/>
        <rect x="75.500" y="4.500" width="8" height="6" rx="1" fill="#cfe1f3" stroke="#2c6fb5"/><path d="M77 6.500h5M77 8.500h5" stroke="#2c6fb5" stroke-dasharray="1 .5"/>
        <circle cx="91" cy="5" r="2"/><path d="M87.500 11.500c0-5 7-5 7 0zM93 9h3v2.500h-3z"/>
        <path d="M98.500 5l3-1.500h2l3 1.500-1 2-1-.5v5h-4v-5l-1 .5z"/>
        <path d="M110.500 10l4-4c-.5-2 1-3 3-2.500l-1.500 1.500 1 1 1.500-1.500c.5 2-1 3.500-2.500 3l-4 4z"/>
      </svg>`;
  }
}
